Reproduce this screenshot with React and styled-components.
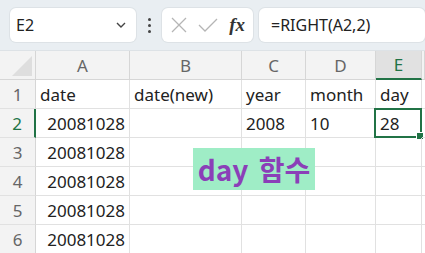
import React from "react";
import styled, { createGlobalStyle } from "styled-components";

const Global = createGlobalStyle`
  html, body { margin: 0; padding: 0; background: #fff; }
  body { font-family: "Noto Sans", "Noto Sans CJK KR", sans-serif; overflow: hidden; }
`;

const Page = styled.div`
  width: 425px;
  height: 253px;
  overflow: hidden;
  display: flex;
  flex-direction: column;
`;

const Toolbar = styled.div`
  height: 50px;
  flex: none;
  background: #e9eef2;
  display: flex;
  align-items: center;
  padding-left: 10px;
  box-sizing: border-box;
`;

const Box = styled.div`
  height: 34px;
  width: ${(p) => p.$w}px;
  flex: ${(p) => (p.$grow ? "1 0 auto" : "none")};
  background: #fff;
  border-radius: 6px;
  box-shadow: 0 0 0 1px #dde2e6;
  display: flex;
  align-items: center;
  box-sizing: border-box;
  margin-right: ${(p) => p.$mr || 0}px;
`;

const NameText = styled.span`
  font-size: 16px;
  color: #222;
  padding-left: 6px;
  flex: 1;
`;

const Formula = styled.span`
  font-size: 16px;
  color: #222;
  padding-left: 12px;
  white-space: nowrap;
`;

const Dots = styled.div`
  width: 26px;
  display: flex;
  flex-direction: column;
  align-items: center;
  gap: 3px;
  & span {
    width: 3px;
    height: 3px;
    border-radius: 50%;
    background: #444;
  }
`;

const Fx = styled.span`
  font-family: "Liberation Serif", serif;
  font-style: italic;
  font-weight: bold;
  font-size: 19px;
  color: #333;
  margin-left: auto;
  margin-right: 8px;
`;

const Sheet = styled.div`
  position: relative;
  display: grid;
  grid-template-columns: 36px 94px 112px 64px 70px 46px 3px;
  grid-template-rows: 29px repeat(6, 29px);
  border-top: 1px solid #dde2e6;
`;

const Corner = styled.div`
  background: #f3f3f3;
  border-right: 1px solid #d6d6d6;
  border-bottom: 1px solid #d6d6d6;
  position: relative;
  &::after {
    content: "";
    position: absolute;
    right: 3px;
    bottom: 3px;
    border-left: 20px solid transparent;
    border-bottom: 20px solid #dedede;
  }
`;

const ColHead = styled.div`
  background: ${(p) => (p.$sel ? "#e1e1e1" : "#f3f3f3")};
  border-right: 1px solid #d6d6d6;
  border-bottom: ${(p) => (p.$sel ? "2px solid #217346" : "1px solid #d6d6d6")};
  color: ${(p) => (p.$sel ? "#217346" : "#666")};
  font-size: 17px;
  display: flex;
  align-items: center;
  justify-content: center;
  box-sizing: border-box;
`;

const RowHead = styled.div`
  background: #f3f3f3;
  border-bottom: 1px solid #e1e1e1;
  border-right: ${(p) => (p.$sel ? "2px solid #217346" : "1px solid #d6d6d6")};
  color: ${(p) => (p.$sel ? "#217346" : "#666")};
  font-size: 17px;
  display: flex;
  align-items: center;
  justify-content: center;
  box-sizing: border-box;
`;

const Cell = styled.div`
  position: relative;
  border-right: 1px solid #e1e1e1;
  border-bottom: 1px solid #e1e1e1;
  font-size: 17px;
  color: #222;
  display: flex;
  align-items: center;
  justify-content: ${(p) => (p.$num ? "flex-end" : "flex-start")};
  padding: 0 4px;
  box-sizing: border-box;
  white-space: nowrap;
`;

const Selection = styled.div`
  position: absolute;
  inset: -1px -1px -1px -2px;
  border: 2px solid #217346;
  pointer-events: none;
  &::after {
    content: "";
    position: absolute;
    right: -4px;
    bottom: -4px;
    width: 6px;
    height: 6px;
    background: #217346;
    border: 1px solid #fff;
  }
`;

const Label = styled.div`
  position: absolute;
  left: 193px;
  top: 97px;
  width: 122px;
  height: 42px;
  background: #9fedc6;
  color: #8b3fb8;
  font-family: "Noto Sans CJK KR", "Noto Sans", sans-serif;
  font-weight: bold;
  font-size: 28px;
  word-spacing: 4px;
  line-height: 1;
  display: flex;
  align-items: center;
  justify-content: center;
  white-space: nowrap;
`;

const cols = ["A", "B", "C", "D", "E"];
const rows = [
  ["date", "date(new)", "year", "month", "day"],
  ["20081028", "", "2008", "10", "28"],
  ["20081028", "", "", "", ""],
  ["20081028", "", "", "", ""],
  ["20081028", "", "", "", ""],
  ["20081028", "", "", "", ""],
];

const Chevron = () => (
  <svg width="14" height="14" viewBox="0 0 14 14" style={{ marginRight: 8 }}>
    <path d="M3 5l4 4 4-4" fill="none" stroke="#444" strokeWidth="1.4" />
  </svg>
);

export default function App() {
  return (
    <Page>
      <Global />
      <Toolbar>
        <Box $w={126}>
          <NameText>E2</NameText>
          <Chevron />
        </Box>
        <Dots>
          <span />
          <span />
          <span />
        </Dots>
        <Box $w={91} $mr={6}>
          <svg width="20" height="20" viewBox="0 0 20 20" style={{ marginLeft: 7 }}>
            <path d="M3 3l14 14M17 3L3 17" stroke="#b5b5b5" strokeWidth="1.3" />
          </svg>
          <svg width="22" height="20" viewBox="0 0 22 20" style={{ marginLeft: 8 }}>
            <path d="M2 10l6 6L20 4" fill="none" stroke="#b5b5b5" strokeWidth="1.3" />
          </svg>
          <Fx>fx</Fx>
        </Box>
        <Box $grow>
          <Formula>=RIGHT(A2,2)</Formula>
        </Box>
      </Toolbar>
      <Sheet>
        <Corner />
        {cols.map((c) => (
          <ColHead key={c} $sel={c === "E"}>
            {c}
          </ColHead>
        ))}
        <ColHead />
        {rows.map((r, i) => (
          <React.Fragment key={i}>
            <RowHead $sel={i === 1}>{i + 1}</RowHead>
            {r.map((v, j) => (
              <Cell key={j} $num={j === 0 && i > 0}>
                {v}
                {i === 1 && j === 4 && <Selection />}
              </Cell>
            ))}
            <Cell />
          </React.Fragment>
        ))}
        <Label>day 함수</Label>
      </Sheet>
    </Page>
  );
}
